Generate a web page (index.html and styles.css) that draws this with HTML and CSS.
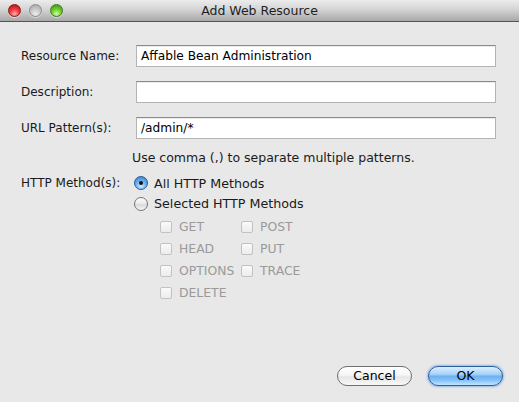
FILE: index.html
```html
<!DOCTYPE html>
<html>
<head>
<meta charset="utf-8">
<title>Add Web Resource</title>
<link rel="stylesheet" href="styles.css">
</head>
<body>
<div class="window">
  <div class="titlebar">
    <div class="lights">
      <span class="light red"></span>
      <span class="light gray"></span>
      <span class="light green"></span>
    </div>
    <div class="title">Add Web Resource</div>
  </div>
  <div class="content">
    <div class="form">
      <div class="row first">
        <div class="lbl">Resource Name:</div>
        <div class="field">Affable Bean Administration</div>
      </div>
      <div class="row">
        <div class="lbl">Description:</div>
        <div class="field"></div>
      </div>
      <div class="row">
        <div class="lbl">URL Pattern(s):</div>
        <div class="field">/admin/*</div>
      </div>
      <div class="hint">Use comma (,) to separate multiple patterns.</div>
      <div class="methods">
        <div class="lbl">HTTP Method(s):</div>
        <div class="choices">
          <div class="radio-row"><span class="radio on"></span><span class="rlabel">All HTTP Methods</span></div>
          <div class="radio-row"><span class="radio"></span><span class="rlabel">Selected HTTP Methods</span></div>
          <div class="checks">
            <div class="check"><span class="box"></span>GET</div>
            <div class="check"><span class="box"></span>POST</div>
            <div class="check"><span class="box"></span>HEAD</div>
            <div class="check"><span class="box"></span>PUT</div>
            <div class="check"><span class="box"></span>OPTIONS</div>
            <div class="check"><span class="box"></span>TRACE</div>
            <div class="check"><span class="box"></span>DELETE</div>
          </div>
        </div>
      </div>
    </div>
    <div class="buttons">
      <div class="btn cancel">Cancel</div>
      <div class="btn ok">OK</div>
    </div>
  </div>
</div>
</body>
</html>
```
FILE: styles.css
```css
html, body {
  margin: 0;
  padding: 0;
}
body {
  width: 519px;
  height: 402px;
  overflow: hidden;
  background: #e8e8e8;
  font-family: "DejaVu Sans", "Liberation Sans", sans-serif;
  font-size: 12px;
  color: #1a1a1a;
}
.window {
  width: 519px;
  height: 402px;
  display: flex;
  flex-direction: column;
}
.titlebar {
  height: 21px;
  border-bottom: 1px solid #555;
  background: linear-gradient(#ececec, #d4d4d4 45%, #a8a8a8);
  display: flex;
  align-items: center;
  position: relative;
}
.lights {
  display: flex;
  gap: 8px;
  padding-left: 8px;
}
.light {
  width: 13px;
  height: 13px;
  border-radius: 50%;
  box-sizing: border-box;
}
.light.red {
  background: radial-gradient(circle at 50% 80%, #ffb0b0 0%, #f23a3e 45%, #b5040c 100%);
  border: 1px solid #8a1a1a;
  box-shadow: 0 1px 0 rgba(255,255,255,.5);
}
.light.gray {
  background: radial-gradient(circle at 50% 80%, #ececec 0%, #c6c6c6 50%, #a2a2a2 100%);
  border: 1px solid #8d8d8d;
  box-shadow: 0 1px 0 rgba(255,255,255,.5);
}
.light.green {
  background: radial-gradient(circle at 50% 80%, #d2fba6 0%, #6ecd2e 45%, #3a8f0a 100%);
  border: 1px solid #3e7a1e;
  box-shadow: 0 1px 0 rgba(255,255,255,.5);
}
.title {
  position: absolute;
  left: 0;
  right: 0;
  top: 0;
  line-height: 21px;
  text-align: center;
  color: #1e1e1e;
  font-size: 12.5px;
}
.content {
  flex: 1;
  display: flex;
  flex-direction: column;
  padding: 0 23px 16px 21px;
}
.form {
  display: flex;
  flex-direction: column;
}
.row {
  display: flex;
  align-items: center;
  margin-top: 14px;
}
.row.first {
  margin-top: 23px;
}
.lbl {
  width: 115px;
  flex: none;
  color: #1a1a1a;
}
.field {
  flex: 1;
  height: 22px;
  box-sizing: border-box;
  background: #fff;
  border: 1px solid #b4b4b4;
  border-top-color: #8a8a8a;
  box-shadow: inset 0 1px 0 #ececec;
  padding: 0 4px;
  line-height: 20px;
  color: #000;
  font-size: 12.2px;
}
.hint {
  margin-top: 11px;
  margin-left: 111px;
  line-height: 16px;
  font-size: 12.5px;
}
.methods {
  display: flex;
  margin-top: 7px;
}
.methods .lbl {
  line-height: 20px;
  height: 20px;
}
.choices {
  margin-left: -2px;
  display: flex;
  flex-direction: column;
}
.radio-row {
  height: 20px;
  display: flex;
  align-items: center;
  gap: 6px;
}
.radio-row:nth-child(2) {
  height: 21px;
}
.rlabel {
  font-size: 12.7px;
}
.radio {
  width: 14px;
  height: 14px;
  box-sizing: border-box;
  border-radius: 50%;
  border: 1px solid #747474;
  background: linear-gradient(#fdfdfd, #e8e8e8 50%, #d9d9d9 55%, #f7f7f7);
  position: relative;
}
.radio.on {
  border-color: #2d5a8c;
  background: radial-gradient(circle at 50% 75%, #d4edff 0%, #6db1ef 45%, #2f7bd0 100%);
}
.radio.on::after {
  content: "";
  position: absolute;
  left: 4px;
  top: 4px;
  width: 4px;
  height: 4px;
  border-radius: 50%;
  background: #111;
}
.checks {
  margin-top: 1px;
  margin-left: 26px;
  display: grid;
  grid-template-columns: 81px auto;
  grid-auto-rows: 22px;
}
.check {
  display: flex;
  align-items: center;
  gap: 7px;
  color: #9a9a9a;
  font-size: 12.4px;
}
.box {
  width: 12px;
  height: 12px;
  box-sizing: border-box;
  border: 1px solid #c2c2c2;
  border-radius: 2px;
  background: linear-gradient(#fafafa, #ececec);
  margin-top: 2px;
}
.buttons {
  margin-top: auto;
  display: flex;
  justify-content: flex-end;
  gap: 16px;
  margin-right: -7px;
}
.btn {
  width: 75px;
  height: 20px;
  box-sizing: border-box;
  border-radius: 10px;
  text-align: center;
  line-height: 18px;
  color: #000;
  font-size: 12.5px;
}
.btn.cancel {
  border: 1px solid #6f6f6f;
  background: linear-gradient(#ffffff, #f6f6f6 45%, #e6e6e6 55%, #f8f8f8);
}
.btn.ok {
  border: 1px solid #2f5f9a;
  background: linear-gradient(#dceeff 0%, #a8d2f7 40%, #6cb1f1 52%, #86c3f8 75%, #c2e6ff 100%);
  box-shadow: 0 0 2px 1px rgba(80,150,230,.55);
}
```
